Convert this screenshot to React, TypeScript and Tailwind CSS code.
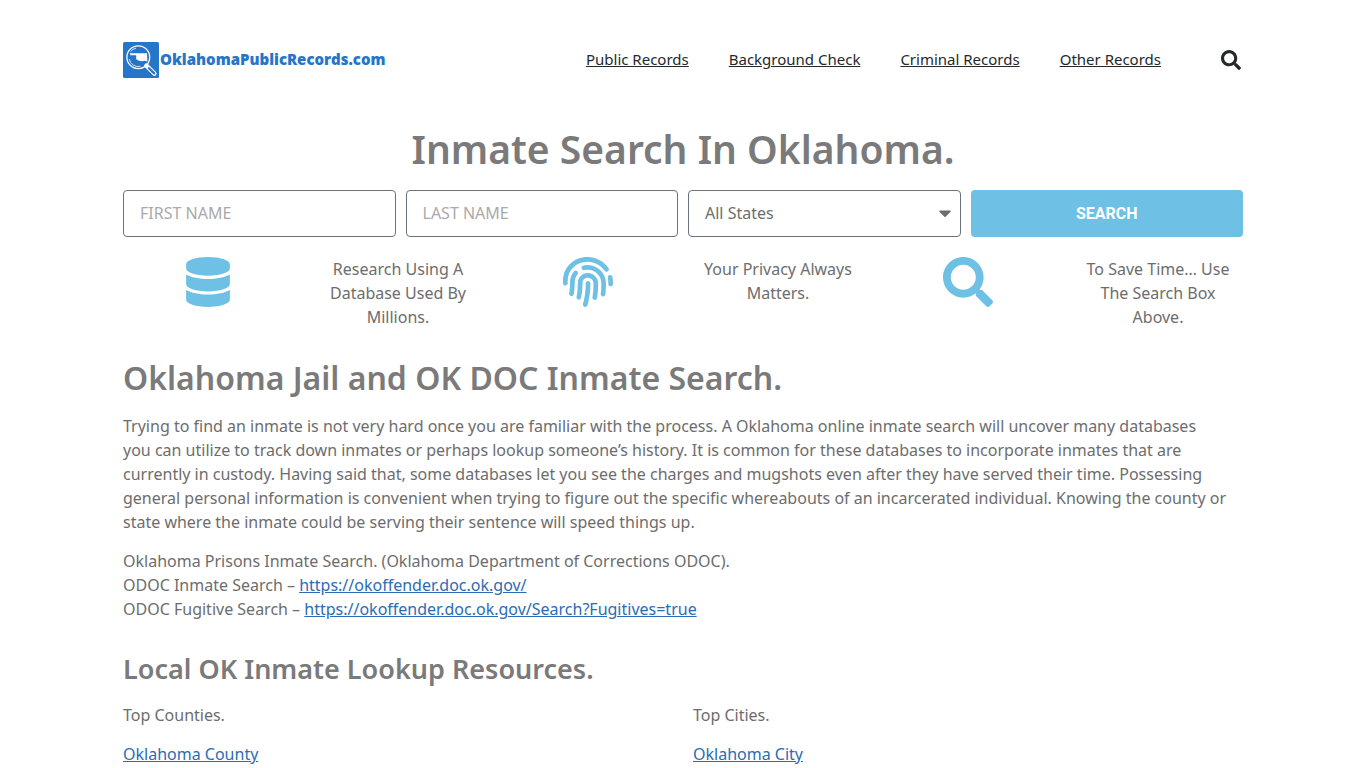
import { FC, FormEvent, useState } from 'react';
import { FaCaretDown, FaDatabase, FaFingerprint, FaSearch } from 'react-icons/fa';

interface MenuItem {
  label: string;
  href: string;
}

const menuItems: MenuItem[] = [
  { label: 'Public Records', href: '#public-records' },
  { label: 'Background Check', href: '#background-check' },
  { label: 'Criminal Records', href: '#criminal-records' },
  { label: 'Other Records', href: '#other-records' },
];

const features = [
  { icon: FaDatabase, text: 'Research Using A Database Used By Millions.' },
  { icon: FaFingerprint, text: 'Your Privacy Always Matters.' },
  { icon: FaSearch, text: 'To Save Time… Use The Search Box Above.' },
];

const states = ['All States', 'Arkansas', 'Kansas', 'Missouri', 'Oklahoma', 'Texas'];

const Logo: FC = () => (
  <a href="#home" className="flex items-center gap-px text-[#2575c8]">
    <svg viewBox="0 0 36 36" className="h-9 w-9" aria-hidden="true">
      <rect width="36" height="36" rx="1.5" fill="#2575c8" />
      <circle cx="15.3" cy="15.2" r="11.4" fill="none" stroke="#fff" strokeWidth="1.3" />
      <path d="M6.2 17A9.4 9.4 0 0 0 17.5 24.4M7.6 9.6A9.4 9.4 0 0 1 13 6.1" fill="none" stroke="#fff" strokeWidth="0.8" />
      <path d="M7 11.2h17l.4 8.2-2.6-.6-2.8.5-3-.5-2.8-1.6v-4H7.3z" fill="#fff" />
      <path d="M23.4 23.6l8 8" stroke="#fff" strokeWidth="4.4" strokeLinecap="round" />
      <path d="M26 26.2l5.2 5.2" stroke="#2575c8" strokeWidth="2.2" strokeLinecap="round" />
    </svg>
    <span className="font-['Open_Sans',sans-serif] text-[15px] font-extrabold">OklahomaPublicRecords.com</span>
  </a>
);

const Header: FC = () => (
  <header className="flex h-[119px] items-center justify-between">
    <Logo />
    <div className="flex items-center gap-[60px]">
      <nav className="flex gap-10 text-[15px] text-[#24292b]">
        {menuItems.map(item => (
          <a key={item.label} href={item.href} className="underline">
            {item.label}
          </a>
        ))}
      </nav>
      <button type="button" aria-label="Search" className="mr-0.5 text-xl text-[#24292b]">
        <FaSearch />
      </button>
    </div>
  </header>
);

const SearchForm: FC = () => {
  const [firstName, setFirstName] = useState('');
  const [lastName, setLastName] = useState('');
  const [state, setState] = useState('All States');

  const handleSubmit = (e: FormEvent) => {
    e.preventDefault();
  };

  const fieldClass = 'h-[47px] w-full rounded border border-[#69727d] bg-white px-4 pb-0.5 placeholder:text-[#a9a9a9]';

  return (
    <form onSubmit={handleSubmit} className="grid grid-cols-4 gap-2.5">
      <input
        type="text"
        aria-label="First name"
        placeholder="FIRST NAME"
        className={fieldClass}
        value={firstName}
        onChange={e => setFirstName(e.target.value)}
      />
      <input
        type="text"
        aria-label="Last name"
        placeholder="LAST NAME"
        className={fieldClass}
        value={lastName}
        onChange={e => setLastName(e.target.value)}
      />
      <div className="relative">
        <select
          aria-label="State"
          className={`${fieldClass} appearance-none`}
          value={state}
          onChange={e => setState(e.target.value)}
        >
          {states.map(name => (
            <option key={name}>{name}</option>
          ))}
        </select>
        <FaCaretDown className="pointer-events-none absolute top-[13px] right-1.5 text-xl" />
      </div>
      <button type="submit" className="h-[47px] rounded bg-[#6ec1e4] font-['Roboto',sans-serif] font-bold text-white">
        SEARCH
      </button>
    </form>
  );
};

const App: FC = () => {
  return (
    <div className="bg-white font-['Noto_Sans',sans-serif] text-base text-[#6d6d6d]">
      <div className="mx-auto max-w-[1140px] px-2.5">
        <Header />

        <h1 className="mt-2.5 mb-[21px] text-center text-[39px] leading-10 font-semibold text-[#7a7a7a]">
          Inmate Search In Oklahoma.
        </h1>

        <SearchForm />

        {/* Features */}
        <div className="-mx-2.5 mt-5 grid grid-cols-3">
          {features.map(({ icon: Icon, text }) => (
            <div key={text} className="grid grid-cols-2 text-center">
              <Icon className="mx-auto text-[50px] text-[#6ec1e4]" />
              <p className="px-2.5">{text}</p>
            </div>
          ))}
        </div>

        <h2 className="mt-[33px] mb-5 text-[32px] leading-8 font-semibold text-[#7a7a7a]">
          Oklahoma Jail and OK DOC Inmate Search.
        </h2>
        <p className="mb-[15px]">
          Trying to find an inmate is not very hard once you are familiar with the process. A Oklahoma online inmate
          search will uncover many databases <br className="hidden xl:block" />
          you can utilize to track down inmates or perhaps lookup someone’s history. It is common for these databases to
          incorporate inmates that are currently in custody. Having said that, some databases let you see the charges
          and mugshots even after they have served their time. Possessing general personal information is convenient
          when trying to figure out the specific whereabouts of an incarcerated individual. Knowing the county or state
          where the inmate could be serving their sentence will speed things up.
        </p>
        <p>
          Oklahoma Prisons Inmate Search. (Oklahoma Department of Corrections ODOC).
          <br />
          ODOC Inmate Search –{' '}
          <a href="https://okoffender.doc.ok.gov/" className="text-[#2b6cb5] underline">
            https://okoffender.doc.ok.gov/
          </a>
          <br />
          ODOC Fugitive Search –{' '}
          <a href="https://okoffender.doc.ok.gov/Search?Fugitives=true" className="text-[#2b6cb5] underline">
            https://okoffender.doc.ok.gov/Search?Fugitives=true
          </a>
        </p>

        <h2 className="mt-[34px] mb-5 text-[27px] leading-7 font-semibold text-[#7a7a7a]">
          Local OK Inmate Lookup Resources.
        </h2>
        <div className="grid grid-cols-2 gap-5">
          <div>
            <p className="mb-[15px]">Top Counties.</p>
            <a href="#oklahoma-county" className="text-[#2b6cb5] underline">
              Oklahoma County
            </a>
          </div>
          <div>
            <p className="mb-[15px]">Top Cities.</p>
            <a href="#oklahoma-city" className="text-[#2b6cb5] underline">
              Oklahoma City
            </a>
          </div>
        </div>
      </div>
    </div>
  );
};

export default App;
